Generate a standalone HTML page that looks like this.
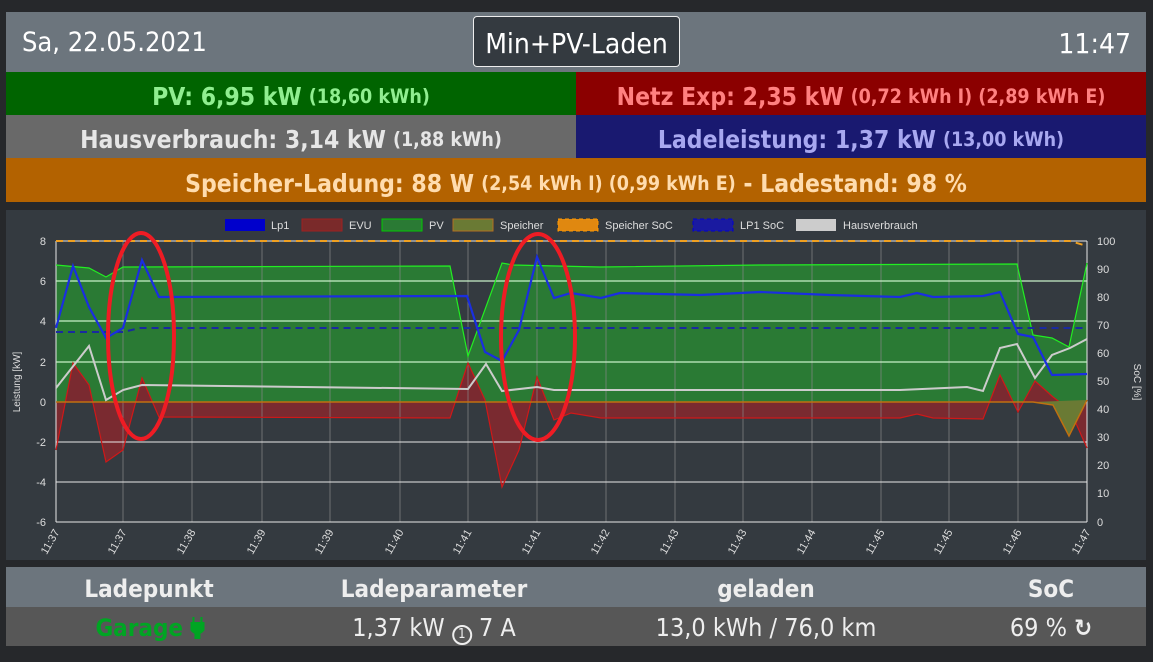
<!DOCTYPE html>
<html><head><meta charset="utf-8"><style>
*{margin:0;padding:0;box-sizing:border-box}
body{width:1153px;height:662px;overflow:hidden;background:#26282b;font-family:"Liberation Sans",sans-serif;position:relative}
.bar{position:absolute;display:flex;align-items:center;justify-content:center;font-weight:bold;font-size:24.5px;padding-top:6px;font-family:"DejaVu Sans Condensed","Liberation Sans",sans-serif}
.bar small{font-size:19.5px;margin-left:7px}
.c{position:absolute;transform:translateX(-50%);white-space:nowrap;font-family:"DejaVu Sans Condensed","Liberation Sans",sans-serif;color:#eee;line-height:30px}
.h{font-weight:bold;font-size:24px;top:574px}
.r{font-size:25px;top:613px}
</style></head><body>
<div style="position:absolute;left:6px;top:12px;width:1140px;height:60px;background:#6c757d"></div>
<div style="position:absolute;left:22px;top:27px;color:#fff;font-size:27px;font-family:'DejaVu Sans Condensed',sans-serif">Sa, 22.05.2021</div>
<div style="position:absolute;left:473px;top:16px;width:207px;height:51px;background:#343a40;border:1px solid #eee;border-radius:4px;color:#fff;font-size:28px;display:flex;align-items:center;justify-content:center;font-family:'DejaVu Sans Condensed',sans-serif;padding-top:3px">Min+PV-Laden</div>
<div style="position:absolute;right:22px;top:27px;color:#fff;font-size:28px;font-family:'DejaVu Sans Condensed',sans-serif">11:47</div>
<div class="bar" style="left:6px;top:72px;width:570px;height:43px;background:#006400;color:#90ee90">PV: 6,95 kW<small>(18,60 kWh)</small></div>
<div class="bar" style="left:576px;top:72px;width:570px;height:43px;background:#8b0000;color:#ff8080">Netz Exp: 2,35 kW<small>(0,72 kWh I) (2,89 kWh E)</small></div>
<div class="bar" style="left:6px;top:115px;width:570px;height:43px;background:#696969;color:#e6e6e6">Hausverbrauch: 3,14 kW<small>(1,88 kWh)</small></div>
<div class="bar" style="left:576px;top:115px;width:570px;height:43px;background:#191970;color:#a8a8f0">Ladeleistung: 1,37 kW<small>(13,00 kWh)</small></div>
<div class="bar" style="left:6px;top:158px;width:1140px;height:44px;background:#b36200;color:#ffdcae">Speicher-Ladung: 88 W<small>(2,54 kWh I) (0,99 kWh E)</small>&nbsp;- Ladestand: 98 %</div>
<div style="position:absolute;left:6px;top:210px;width:1140px;height:350px;background:#343a40"></div>
<svg style="position:absolute;left:0;top:0" width="1153" height="662" font-family="Liberation Sans,sans-serif" font-size="11">
<g fill="#ddd">
<rect x="225" y="219" width="40" height="12" fill="#0000cc"/><text x="271" y="229">Lp1</text>
<rect x="302" y="219" width="40" height="12" fill="#7a2a2a" stroke="#a02020"/><text x="349" y="229">EVU</text>
<rect x="382" y="219" width="40" height="12" fill="#2a7a34" stroke="#0c0"/><text x="429" y="229">PV</text>
<rect x="453" y="219" width="40" height="12" fill="#6a7a34" stroke="#b37020"/><text x="500" y="229">Speicher</text>
<rect x="558" y="219" width="40" height="12" fill="#e08810" stroke="#f90" stroke-dasharray="4 3"/><text x="605" y="229">Speicher SoC</text>
<rect x="693" y="219" width="40" height="12" fill="#1a1aa0" stroke="#00c" stroke-dasharray="4 3"/><text x="740" y="229">LP1 SoC</text>
<rect x="796" y="219" width="40" height="12" fill="#ccc"/><text x="843" y="229">Hausverbrauch</text>
</g>
<polygon fill="#2a7a34" points="56,402 56,265 89,268 106,277 123,267 450,266 468,356 502,263 513,265 600,267 760,265 1017,264 1033,335 1052,338 1069,347 1087,263 1087,402"/>
<polygon fill="#7a2a30" points="56,402 56,450 73,363 89,385 106,462 123,450 142,378 159,417 450,418 468,363 485,400 502,487 519,450 537,377 554,420 571,413 601,418 900,418 917,414 933,418 983,419 1000,375 1018,412 1035,381 1053,397 1070,410 1087,448 1087,402"/>
<g stroke="#888" stroke-width="1" stroke-opacity="0.7">
<line x1="123" y1="241" x2="123" y2="522"/><line x1="192" y1="241" x2="192" y2="522"/><line x1="262" y1="241" x2="262" y2="522"/><line x1="330" y1="241" x2="330" y2="522"/><line x1="400" y1="241" x2="400" y2="522"/><line x1="468" y1="241" x2="468" y2="522"/><line x1="537" y1="241" x2="537" y2="522"/><line x1="606" y1="241" x2="606" y2="522"/><line x1="675" y1="241" x2="675" y2="522"/><line x1="743" y1="241" x2="743" y2="522"/><line x1="812" y1="241" x2="812" y2="522"/><line x1="881" y1="241" x2="881" y2="522"/><line x1="949" y1="241" x2="949" y2="522"/><line x1="1018" y1="241" x2="1018" y2="522"/>
</g>
<g stroke="#e8e8e8" stroke-width="1">
<line x1="56" y1="241" x2="1087" y2="241"/><line x1="56" y1="442" x2="1087" y2="442"/><line x1="56" y1="482" x2="1087" y2="482"/><line x1="56" y1="522" x2="1087" y2="522"/>
<line x1="56" y1="241" x2="56" y2="522"/><line x1="1087" y1="241" x2="1087" y2="522"/>
</g>
<g stroke="#c8f0c8" stroke-width="1.2">
<line x1="56" y1="281" x2="1087" y2="281"/><line x1="56" y1="321" x2="1087" y2="321"/><line x1="56" y1="362" x2="1087" y2="362"/>
</g>
<polyline fill="none" stroke="#d01818" stroke-width="1.2" points="56,450 73,363 89,385 106,462 123,450 142,378 159,417 450,418 468,363 485,400 502,487 519,450 537,377 554,420 571,413 601,418 900,418 917,414 933,418 983,419 1000,375 1018,412 1035,381 1053,397 1070,410 1087,448"/>
<polygon fill="#6a7a34" points="1033,402 1053,405 1069,436 1087,400"/>
<polyline fill="none" stroke="#c07010" stroke-width="1.5" points="56,402 1033,402 1053,405 1069,436 1087,400"/>
<polyline fill="none" stroke="#22ee22" stroke-width="1.2" points="56,265 89,268 106,277 123,267 450,266 468,356 502,263 513,265 600,267 760,265 1017,264 1033,335 1052,338 1069,347 1087,263"/>
<polyline fill="none" stroke="#ccc" stroke-width="2" points="56,388 89,346 106,400 123,390 142,385 468,389 486,364 502,391 537,387 554,390 900,390 967,387 983,391 1000,348 1017,344 1035,378 1052,355 1070,348 1087,339"/>
<polyline fill="none" stroke="#1a2aa0" stroke-width="2" stroke-dasharray="7 5" points="56,332 123,332 140,328 1087,328"/>
<polyline fill="none" stroke="#f0a020" stroke-width="2" stroke-dasharray="7 5" points="56,241 1070,241 1087,246"/>
<polyline fill="none" stroke="#1a2ee0" stroke-width="2.2" points="56,328 73,266 89,307 106,338 123,328 142,260 159,297 467,296 485,352 502,361 519,330 537,257 554,298 571,293 601,298 620,293 700,295 760,292 830,295 900,297 917,293 933,297 983,296 1000,292 1018,334 1033,337 1052,375 1087,374"/>
<ellipse cx="141" cy="336" rx="33" ry="103" fill="none" stroke="#ee1c24" stroke-width="4"/>
<ellipse cx="538" cy="337" rx="37" ry="103" fill="none" stroke="#ee1c24" stroke-width="4"/>
<g fill="#ddd" text-anchor="end">
<text x="46" y="245">8</text><text x="46" y="285">6</text><text x="46" y="325">4</text><text x="46" y="366">2</text><text x="46" y="406">0</text><text x="46" y="446">-2</text><text x="46" y="486">-4</text><text x="46" y="526">-6</text>
</g>
<g fill="#ddd">
<text x="1097" y="245">100</text><text x="1097" y="273">90</text><text x="1097" y="301">80</text><text x="1097" y="329">70</text><text x="1097" y="357">60</text><text x="1097" y="385">50</text><text x="1097" y="413">40</text><text x="1097" y="441">30</text><text x="1097" y="469">20</text><text x="1097" y="497">10</text><text x="1097" y="526">0</text>
</g>
<text transform="translate(20,382) rotate(-90)" fill="#ddd" font-size="10" text-anchor="middle">Leistung [kW]</text>
<text transform="translate(1134,382) rotate(90)" fill="#ddd" font-size="10" text-anchor="middle">SoC [%]</text>
<g fill="#ddd" font-size="11" text-anchor="end">
<text transform="translate(60,532) rotate(-60)">11:37</text><text transform="translate(127,532) rotate(-60)">11:37</text><text transform="translate(196,532) rotate(-60)">11:38</text><text transform="translate(266,532) rotate(-60)">11:39</text><text transform="translate(334,532) rotate(-60)">11:39</text><text transform="translate(404,532) rotate(-60)">11:40</text><text transform="translate(472,532) rotate(-60)">11:41</text><text transform="translate(541,532) rotate(-60)">11:41</text><text transform="translate(610,532) rotate(-60)">11:42</text><text transform="translate(679,532) rotate(-60)">11:43</text><text transform="translate(747,532) rotate(-60)">11:43</text><text transform="translate(816,532) rotate(-60)">11:44</text><text transform="translate(885,532) rotate(-60)">11:45</text><text transform="translate(953,532) rotate(-60)">11:45</text><text transform="translate(1022,532) rotate(-60)">11:46</text><text transform="translate(1091,532) rotate(-60)">11:47</text>
</g>
</svg>
<div style="position:absolute;left:6px;top:567px;width:1140px;height:40px;background:#6c757d"></div>
<div style="position:absolute;left:6px;top:607px;width:1140px;height:39px;background:#575757"></div>
<div class="c h" style="left:149px">Ladepunkt</div>
<div class="c h" style="left:434px">Ladeparameter</div>
<div class="c h" style="left:766px">geladen</div>
<div class="c h" style="left:1051px">SoC</div>
<div class="c r" style="left:150px;font-weight:bold;color:#00a523;font-size:24px">Garage <svg width="14" height="22" viewBox="0 0 14 22" style="vertical-align:-3px"><path d="M3 0v6M11 0v6M0 6h14v4a7 7 0 0 1-5 6v6h-4v-6a7 7 0 0 1-5-6z" fill="#00a523" stroke="#00a523" stroke-width="2"/></svg></div>
<div class="c r" style="left:434px">1,37 kW <span style="display:inline-block;width:20px;height:20px;border:2px solid #eee;border-radius:50%;font-size:13px;line-height:16px;text-align:center;vertical-align:-2px">1</span> 7 A</div>
<div class="c r" style="left:766px">13,0 kWh / 76,0 km</div>
<div class="c r" style="left:1051px">69 % <b style="font-size:24px">↻</b></div>
</body></html>
